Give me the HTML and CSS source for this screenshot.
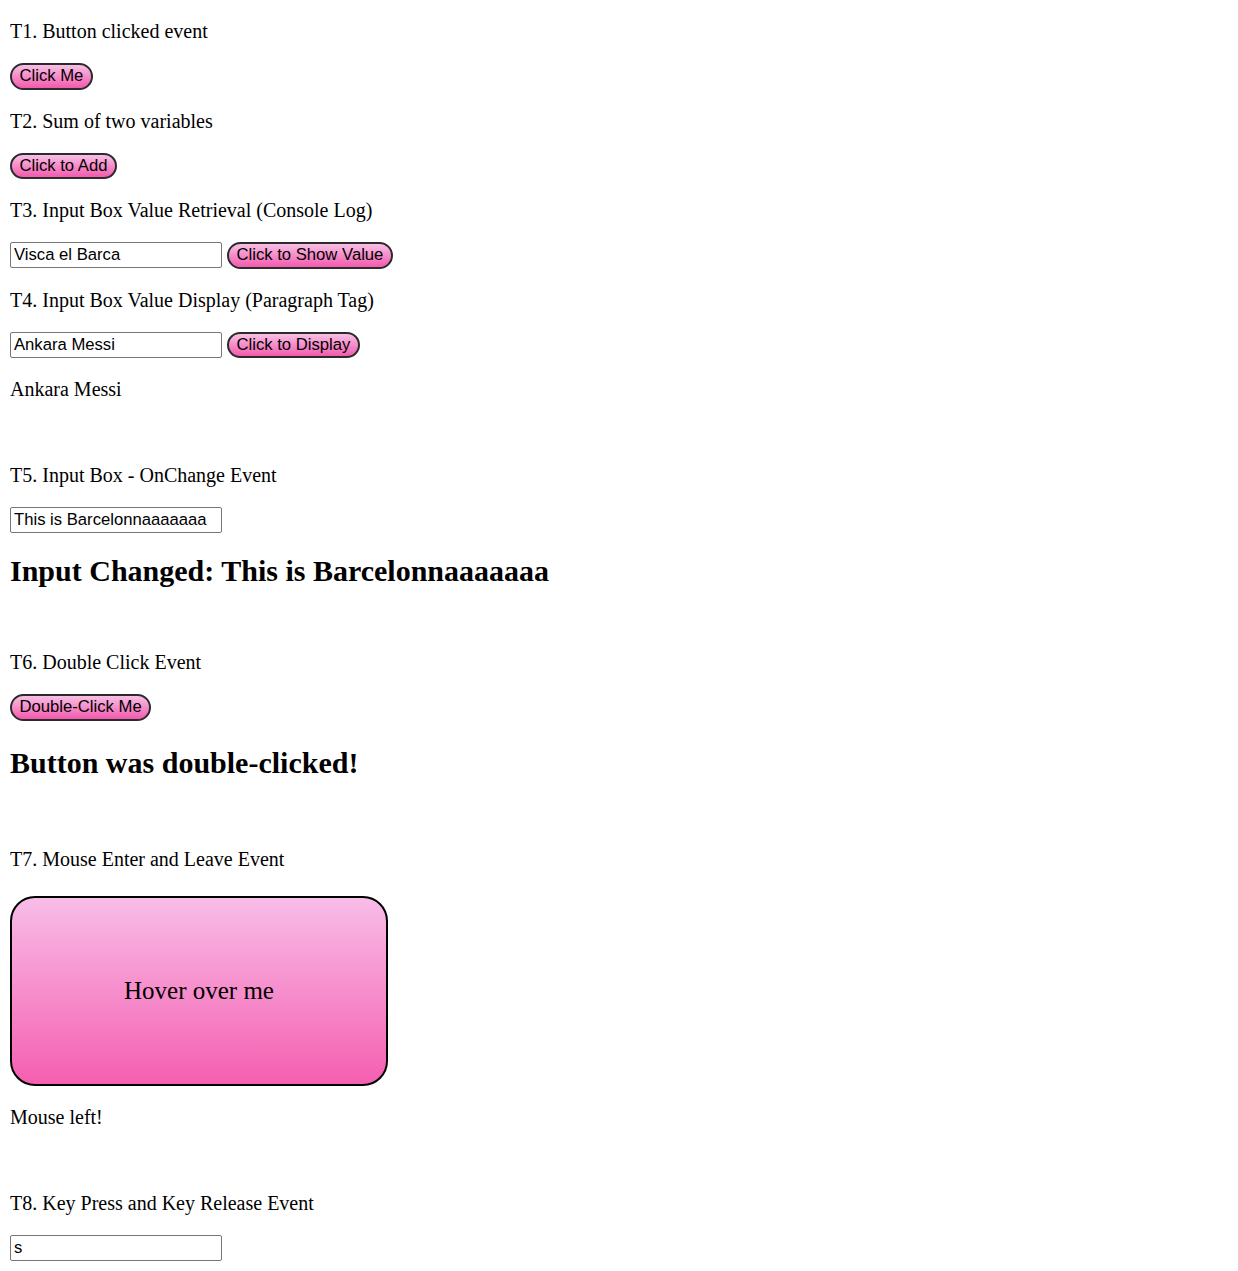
FILE: index.html
```html
<!DOCTYPE html>
<html lang="en">
<head>
<meta charset="utf-8">
<title>Events</title>
<link rel="stylesheet" href="styles.css">
</head>
<body>
<div class="app">
  <p class="label">T1. Button clicked event</p>
  <button class="btn">Click Me</button>
  <p class="label">T2. Sum of two variables</p>
  <button class="btn">Click to Add</button>
  <p class="label">T3. Input Box Value Retrieval (Console Log)</p>
  <input class="field" type="text" value="Visca el Barca"> <button class="btn">Click to Show Value</button>
  <p class="label">T4. Input Box Value Display (Paragraph Tag)</p>
  <input class="field" type="text" value="Ankara Messi"> <button class="btn">Click to Display</button>
  <p class="label">Ankara Messi</p>
  <br>
  <p class="label">T5. Input Box - OnChange Event</p>
  <input class="field" type="text" value="This is Barcelonnaaaaaaa">
  <h2 class="result result-tight">Input Changed: This is Barcelonnaaaaaaa</h2>
  <br>
  <p class="label">T6. Double Click Event</p>
  <button class="btn">Double-Click Me</button>
  <h2 class="result">Button was double-clicked!</h2>
  <br>
  <p class="label">T7. Mouse Enter and Leave Event</p>
  <div class="hover-box">Hover over me</div>
  <p class="label">Mouse left!</p>
  <br>
  <p class="label">T8. Key Press and Key Release Event</p>
  <input class="field" type="text" value="s">
</div>
</body>
</html>
```

FILE: styles.css
```css
body {
  margin: 0 10px 10px;
  font-family: "Liberation Serif", "Times New Roman", serif;
  font-size: 20px;
  color: #000;
  background: #fff;
}

.label {
  margin: 20px 0;
}

.result {
  font-size: 30px;
  font-weight: bold;
  margin: 25px 0;
}

.result-tight {
  margin: 21px 0 20px;
}

.btn {
  font-family: "Liberation Sans", Arial, sans-serif;
  font-size: 16.67px;
  color: #000;
  padding: 1.25px 7.5px;
  border: 2px solid #2b2b2b;
  border-radius: 20px;
  background: linear-gradient(to bottom, #f8bfe4, #f35aae);
  margin: 0;
}

.field {
  box-sizing: border-box;
  width: 212px;
  height: 26px;
  font-family: "Liberation Sans", Arial, sans-serif;
  font-size: 16.67px;
  color: #000;
  padding: 1px 3px;
  border: 1px solid #767676;
  border-radius: 2px;
  margin: 0;
}

.hover-box {
  box-sizing: border-box;
  width: 378px;
  height: 190px;
  margin: 25px 0 20px;
  border: 2px solid #000;
  border-radius: 25px;
  background: linear-gradient(to bottom, #f8bde8, #f55fb0);
  display: flex;
  align-items: center;
  justify-content: center;
  font-size: 25px;
}
```
